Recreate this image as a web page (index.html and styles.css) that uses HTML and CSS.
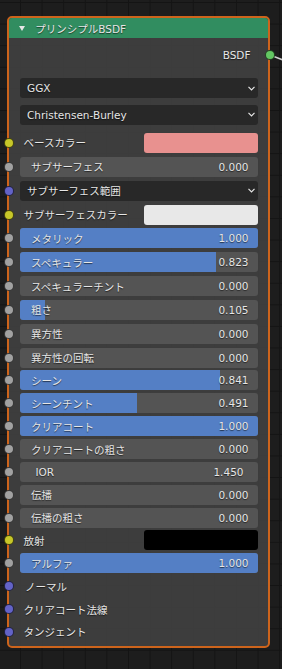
FILE: index.html
```html
<!DOCTYPE html>
<html lang="ja">
<head>
    <meta charset="UTF-8">
    <meta name="viewport" content="width=device-width, initial-scale=1.0">
    <title>プリンシプルBSDF</title>
    <link rel="stylesheet" href="styles.css">
</head>
<body>
    <div class="node">
        <div class="node-header">
            <svg class="collapse" width="6" height="5" viewBox="0 0 6 5"><polygon points="0,0 6,0 3,5"/></svg>
            <span>プリンシプルBSDF</span>
        </div>

        <div class="node-body">
            <div class="output">
                <svg class="wire" width="14" height="12" viewBox="0 0 14 12"><line x1="0" y1="5" x2="14" y2="10.5"/></svg>
                <span>BSDF</span>
                <i class="socket socket-shader"></i>
            </div>

            <div class="dropdown first">
                <span>GGX</span>
                <svg class="chevron" width="7" height="5" viewBox="0 0 7 5"><polyline points="0.5,0.8 3.5,3.8 6.5,0.8"/></svg>
            </div>
            <div class="dropdown second">
                <span>Christensen-Burley</span>
                <svg class="chevron" width="7" height="5" viewBox="0 0 7 5"><polyline points="0.5,0.8 3.5,3.8 6.5,0.8"/></svg>
            </div>

            <div class="inputs">
                <div class="group group-a">
                    <div class="row">
                        <i class="socket socket-color"></i>
                        <span class="row-label">ベースカラー</span>
                        <span class="swatch swatch-base"></span>
                    </div>
                    <div class="row">
                        <i class="socket socket-float"></i>
                        <div class="slider"><span class="label">サブサーフェス</span><span class="value">0.000</span></div>
                    </div>
                    <div class="row">
                        <i class="socket socket-vector"></i>
                        <div class="dropdown">
                            <span>サブサーフェス範囲</span>
                            <svg class="chevron" width="7" height="5" viewBox="0 0 7 5"><polyline points="0.5,0.8 3.5,3.8 6.5,0.8"/></svg>
                        </div>
                    </div>
                    <div class="row">
                        <i class="socket socket-color"></i>
                        <span class="row-label">サブサーフェスカラー</span>
                        <span class="swatch swatch-white"></span>
                    </div>
                    <div class="row">
                        <i class="socket socket-float"></i>
                        <div class="slider"><div class="fill" style="width: 100%"></div><span class="label">メタリック</span><span class="value">1.000</span></div>
                    </div>
                    <div class="row">
                        <i class="socket socket-float"></i>
                        <div class="slider"><div class="fill" style="width: 82.3%"></div><span class="label">スペキュラー</span><span class="value">0.823</span></div>
                    </div>
                    <div class="row">
                        <i class="socket socket-float"></i>
                        <div class="slider"><span class="label">スペキュラーチント</span><span class="value">0.000</span></div>
                    </div>
                    <div class="row">
                        <i class="socket socket-float"></i>
                        <div class="slider"><div class="fill" style="width: 10.5%"></div><span class="label">粗さ</span><span class="value">0.105</span></div>
                    </div>
                    <div class="row">
                        <i class="socket socket-float"></i>
                        <div class="slider"><span class="label">異方性</span><span class="value">0.000</span></div>
                    </div>
                    <div class="row">
                        <i class="socket socket-float"></i>
                        <div class="slider"><span class="label">異方性の回転</span><span class="value">0.000</span></div>
                    </div>
                </div>

                <div class="group group-b">
                    <div class="row">
                        <i class="socket socket-float"></i>
                        <div class="slider"><div class="fill" style="width: 84.1%"></div><span class="label">シーン</span><span class="value">0.841</span></div>
                    </div>
                    <div class="row">
                        <i class="socket socket-float"></i>
                        <div class="slider"><div class="fill" style="width: 49.1%"></div><span class="label">シーンチント</span><span class="value">0.491</span></div>
                    </div>
                    <div class="row">
                        <i class="socket socket-float"></i>
                        <div class="slider"><div class="fill" style="width: 100%"></div><span class="label">クリアコート</span><span class="value">1.000</span></div>
                    </div>
                    <div class="row">
                        <i class="socket socket-float"></i>
                        <div class="slider"><span class="label">クリアコートの粗さ</span><span class="value">0.000</span></div>
                    </div>
                    <div class="row">
                        <i class="socket socket-float"></i>
                        <div class="slider slider-ior"><span class="label">IOR</span><span class="value">1.450</span></div>
                    </div>
                    <div class="row">
                        <i class="socket socket-float"></i>
                        <div class="slider"><span class="label">伝播</span><span class="value">0.000</span></div>
                    </div>
                    <div class="row">
                        <i class="socket socket-float"></i>
                        <div class="slider"><span class="label">伝播の粗さ</span><span class="value">0.000</span></div>
                    </div>
                    <div class="row">
                        <i class="socket socket-color"></i>
                        <span class="row-label">放射</span>
                        <span class="swatch swatch-black"></span>
                    </div>
                    <div class="row">
                        <i class="socket socket-float"></i>
                        <div class="slider"><div class="fill" style="width: 100%"></div><span class="label">アルファ</span><span class="value">1.000</span></div>
                    </div>
                    <div class="row">
                        <i class="socket socket-vector"></i>
                        <span class="row-label plain">ノーマル</span>
                    </div>
                    <div class="row">
                        <i class="socket socket-vector"></i>
                        <span class="row-label">クリアコート法線</span>
                    </div>
                    <div class="row">
                        <i class="socket socket-vector"></i>
                        <span class="row-label">タンジェント</span>
                    </div>
                </div>
            </div>
        </div>
    </div>
</body>
</html>
```

FILE: styles.css
```css
body {
    margin: 0;
    padding: 0;
    height: 669px;
    overflow: hidden;
    background-color: #1d1d1d;
    background-image:
        linear-gradient(90deg, #141414 1px, transparent 1px),
        linear-gradient(#141414 1px, transparent 1px);
    background-size: 21.6px 21.6px;
    background-position: 20px 2px;
    color: #e6e6e6;
    font-family: "DejaVu Sans", "Noto Sans CJK JP", sans-serif;
    font-size: 10.5px;
    text-shadow: 0 1px 1px rgba(0, 0, 0, 0.6);
}

.node {
    position: relative;
    margin: 16px 0 0 7px;
    width: 263px;
    height: 631.7px;
    box-sizing: border-box;
    border: 2px solid #cd641c;
    border-radius: 5px;
    background-color: rgba(64, 64, 64, 0.92);
}

.node-header {
    height: 20px;
    display: flex;
    align-items: center;
    gap: 10px;
    padding-left: 10.3px;
    background-color: #318d60;
    border-radius: 3px 3px 0 0;
}

.collapse polygon {
    fill: #e6e6e6;
}

.node-body {
    padding: 7px 10px 0 11px;
}

.output {
    position: relative;
    height: 20px;
    display: flex;
    justify-content: flex-end;
    align-items: center;
    padding-right: 7.5px;
}

.wire {
    position: absolute;
    right: -26px;
    top: 5px;
}

.wire line {
    stroke: #d2d2d2;
    stroke-width: 1.6;
}

.dropdown {
    height: 20px;
    flex: 1;
    display: flex;
    align-items: center;
    justify-content: space-between;
    padding: 0 3px 0 7px;
    background-color: #282828;
    border-radius: 3px;
}

.dropdown.first {
    margin-top: 13.3px;
}

.dropdown.second {
    margin-top: 6.7px;
}

.chevron polyline {
    fill: none;
    stroke: #e6e6e6;
    stroke-width: 1.2;
}

.inputs {
    margin-top: 8px;
}

.group {
    display: flex;
    flex-direction: column;
}

.group-a {
    gap: 3.85px;
}

.group-b {
    gap: 2.87px;
    margin-top: 2.87px;
}

.row {
    position: relative;
    height: 20px;
    display: flex;
    align-items: center;
}

.row-label {
    flex: 1;
    padding-left: 3.5px;
}

.row-label.plain {
    padding-left: 5px;
}

.socket {
    position: absolute;
    top: 50%;
    left: -16.5px;
    width: 10px;
    height: 10px;
    box-sizing: border-box;
    border: 1px solid rgba(0, 0, 0, 0.65);
    border-radius: 50%;
    transform: translateY(-50%);
}

.output .socket {
    left: auto;
    right: -17px;
}

.socket-shader {
    background-color: #63c763;
}

.socket-color {
    background-color: #c7c729;
}

.socket-float {
    background-color: #a1a1a1;
}

.socket-vector {
    background-color: #6363c7;
}

.swatch {
    width: 114px;
    height: 20px;
    border-radius: 3px;
}

.swatch-base {
    background-color: #e8918f;
}

.swatch-white {
    background-color: #e8e8e8;
}

.swatch-black {
    background-color: #000000;
}

.slider {
    position: relative;
    flex: 1;
    height: 20px;
    display: flex;
    align-items: center;
    justify-content: space-between;
    padding: 0 9.5px 0 11px;
    background-color: #545454;
    border-radius: 3px;
    overflow: hidden;
}

.slider .fill {
    position: absolute;
    left: 0;
    top: 0;
    bottom: 0;
    background-color: #547fc5;
}

.slider .label,
.slider .value {
    position: relative;
}

.slider-ior {
    padding: 0 14.5px 0 15.5px;
}
```
